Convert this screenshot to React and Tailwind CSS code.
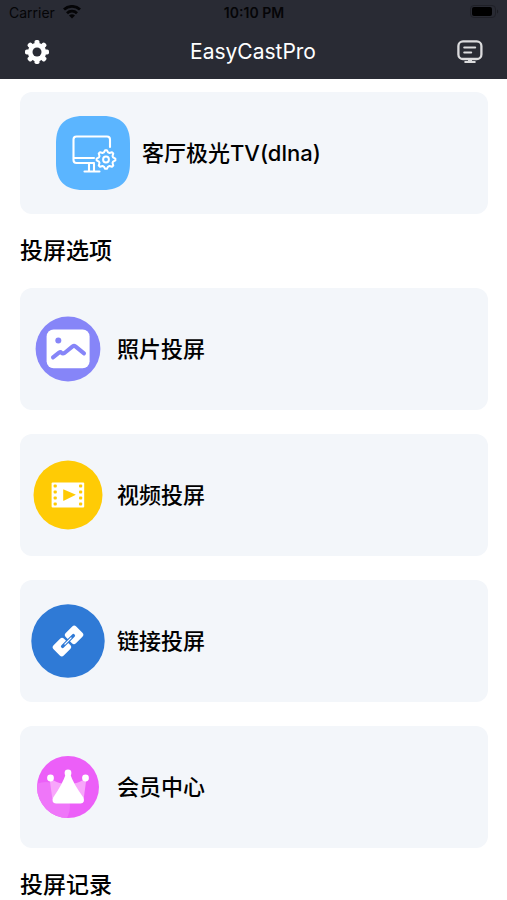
import clsx from 'clsx';

function WifiIcon() {
  return (
    <svg width="18" height="14" viewBox="0 0 18 14" fill="none" stroke="#050507" strokeWidth="2.8">
      <path d="M1 4.6a11.5 11.5 0 0 1 16 0" />
      <path d="M4 8.2a7.2 7.2 0 0 1 10 0" />
      <path d="M9 13.4 6 10.6a4.3 4.3 0 0 1 6 0Z" fill="#050507" stroke="none" />
    </svg>
  );
}

function BatteryIcon() {
  return (
    <svg width="29" height="14" viewBox="0 0 29 14">
      <rect x="0.5" y="0.5" width="25" height="12" rx="3.5" fill="none" stroke="#1f2027" />
      <rect x="2" y="2" width="20" height="9" rx="2" fill="#000" />
      <path d="M27 4.5c1.6.6 1.6 3.4 0 4Z" fill="#1b1c22" />
    </svg>
  );
}

function GearIcon() {
  return (
    <svg width="24" height="24" viewBox="-12 -12 24 24">
      <g fill="#fff">
        {[0, 45, 90, 135].map((angle) => (
          <rect key={angle} x="-2.5" y="-12" width="5" height="24" rx="1.8" transform={`rotate(${angle})`} />
        ))}
        <circle r="9.2" />
      </g>
      <circle r="4.5" fill="#292b34" />
    </svg>
  );
}

function MonitorIcon() {
  return (
    <svg width="26" height="24" viewBox="0 0 26 24" fill="none" stroke="#dcdcde" strokeWidth="2.3" strokeLinecap="round">
      <rect x="1.4" y="1.4" width="23" height="17.6" rx="4.6" />
      <path d="M7.2 7.4h11M7.2 12.6h7M8.2 22h9.6" strokeWidth="2" />
      <path d="M13 19v3" strokeWidth="4" strokeLinecap="butt" />
    </svg>
  );
}

// Outline of an eight-toothed gear around the origin
const gearPoints = Array.from({ length: 32 }, (_, i) => {
  const angle = ((i - 0.5) * Math.PI) / 16;
  const radius = i % 4 < 2 ? 9.4 : 7.4;
  return `${(radius * Math.sin(angle)).toFixed(2)},${(-radius * Math.cos(angle)).toFixed(2)}`;
}).join(' ');

function DeviceIcon() {
  return (
    <svg width="74" height="74" viewBox="0 0 74 74" className="shrink-0">
      <path d="M27 0H47C65 0 74 9 74 27V47C74 65 65 74 47 74H27C9 74 0 65 0 47V27C0 9 9 0 27 0Z" fill="#5bb5ff" />
      <g fill="none" stroke="#fff" strokeWidth="2.1" strokeLinecap="round" strokeLinejoin="round">
        <path d="M54 31v-7.5a3 3 0 0 0-3-3H20.5a3 3 0 0 0-3 3V44a3 3 0 0 0 3 3H38M18 42h20" />
        <path d="M33 48v6.5M38 48v6.5M28.5 55.5h15" />
        <g transform="translate(50 43.5)" strokeWidth="2">
          <polygon points={gearPoints} />
          <circle r="2.9" />
        </g>
      </g>
    </svg>
  );
}

function PhotoIcon() {
  return (
    <>
      <circle r="32.4" fill="#8685f8" />
      <rect x="-21.4" y="-19.6" width="43" height="38.8" rx="7" fill="#fff" />
      <circle cx="-9.7" cy="-8.6" r="3" fill="#8685f8" />
      <path
        d="M-15 8.4-9 3.6Q-7.6 2.6-6.4 3.8T-3.2 3.8L4.6-2.6Q6-3.6 7.4-2.6L16 4.4"
        fill="none"
        stroke="#8685f8"
        strokeWidth="4"
        strokeLinecap="round"
        strokeLinejoin="round"
      />
    </>
  );
}

function VideoIcon() {
  return (
    <>
      <circle r="34.5" fill="#ffcb05" />
      <rect x="-16.4" y="-12.4" width="32.6" height="25" rx="1" fill="#fff" />
      <g fill="#ffcb05">
        {[-10.4, -4.6, 1.6, 7.6].map((y) => (
          <g key={y}>
            <rect x="-14.4" y={y} width="3.2" height="3" rx="1" />
            <rect x="11" y={y} width="3.2" height="3" rx="1" />
          </g>
        ))}
        <path d="M-4.8-5.2v10.6q0 .6.6.4L7.4 0q.6-.3 0-.6L-4.2-5.6q-.6-.2-.6.4Z" />
      </g>
    </>
  );
}

function LinkIcon() {
  return (
    <>
      <circle r="36.7" fill="#2f7ad6" />
      <g transform="rotate(-45)">
        <g fill="#fff">
          <rect x="-16" y="-7.2" width="14.8" height="14.4" rx="2.8" />
          <rect x="1.2" y="-7.2" width="14.8" height="14.4" rx="2.8" />
        </g>
        <path d="M-7.6 0H7.6" stroke="#2f7ad6" strokeWidth="3.4" strokeLinecap="round" />
        <path d="M-4.4 0H4.4" stroke="#fff" strokeWidth="1.2" strokeLinecap="round" />
      </g>
    </>
  );
}

function CrownIcon() {
  return (
    <>
      <clipPath id="crown-disc">
        <circle r="31" />
      </clipPath>
      <circle r="31" fill="#ec5ff8" />
      <circle cx="-22" cy="19" r="24" fill="#ef76f9" clipPath="url(#crown-disc)" />
      <path d="M-18.5-9-15.5 13H15.5L18.5-9Q8-2 4-4H-4Q-8-2-18.5-9Z" fill="#f8a6fb" />
      <path d="M-2.6-12Q-5-4-14.8 10.6-17 16.4-12 16.4H12.6Q17.4 16.4 15.4 10.6 5-4 2.6-12Z" fill="#fff" />
      <g fill="#fff">
        <circle cx="-17.5" cy="-9" r="3.4" />
        <circle cy="-14" r="3.4" />
        <circle cx="17.5" cy="-9" r="3.4" />
      </g>
    </>
  );
}

const options = [
  { label: '照片投屏', Icon: PhotoIcon },
  { label: '视频投屏', Icon: VideoIcon },
  { label: '链接投屏', Icon: LinkIcon },
  { label: '会员中心', Icon: CrownIcon },
];

const card = 'flex h-[122px] w-full items-center rounded-xl bg-[#f3f6fa] text-left text-[22px] font-medium';

export default function App() {
  return (
    <div className="bg-white font-[Inter,'Noto_Sans_CJK_SC',sans-serif] text-black">
      <header className="bg-[#292b34]">
        {/* Status bar */}
        <div className="grid h-7 grid-cols-3 items-center pr-2 pb-1 pl-[9px] text-[14px] text-[#050507]">
          <div className="flex items-center gap-2">
            <span>Carrier</span>
            <WifiIcon />
          </div>
          <span className="text-center font-semibold">10:10 PM</span>
          <div className="flex justify-end">
            <BatteryIcon />
          </div>
        </div>

        {/* Nav bar */}
        <div className="flex h-[51px] items-center justify-between pr-6 pb-1 pl-[25px]">
          <button type="button" aria-label="Settings">
            <GearIcon />
          </button>
          <h1 className="text-[21px] text-white">EasyCastPro</h1>
          <button type="button" aria-label="Devices">
            <MonitorIcon />
          </button>
        </div>
      </header>

      <main className="pt-[13px] pr-[19px] pl-5">
        {/* Current device */}
        <button type="button" className={clsx(card, 'gap-3 pl-9')}>
          <DeviceIcon />
          客厅极光TV(dlna)
        </button>

        <h2 className="py-5 text-[23px] leading-[34px] font-medium">投屏选项</h2>

        {/* Cast options */}
        <div className="flex flex-col gap-6">
          {options.map(({ label, Icon }) => (
            <button key={label} type="button" className={clsx(card, 'gap-3 pl-[11px]')}>
              <svg width="74" height="74" viewBox="-37 -37 74 74" className="shrink-0">
                <Icon />
              </svg>
              {label}
            </button>
          ))}
        </div>

        <h2 className="pt-5 text-[23px] leading-[34px] font-medium">投屏记录</h2>
      </main>
    </div>
  );
}
